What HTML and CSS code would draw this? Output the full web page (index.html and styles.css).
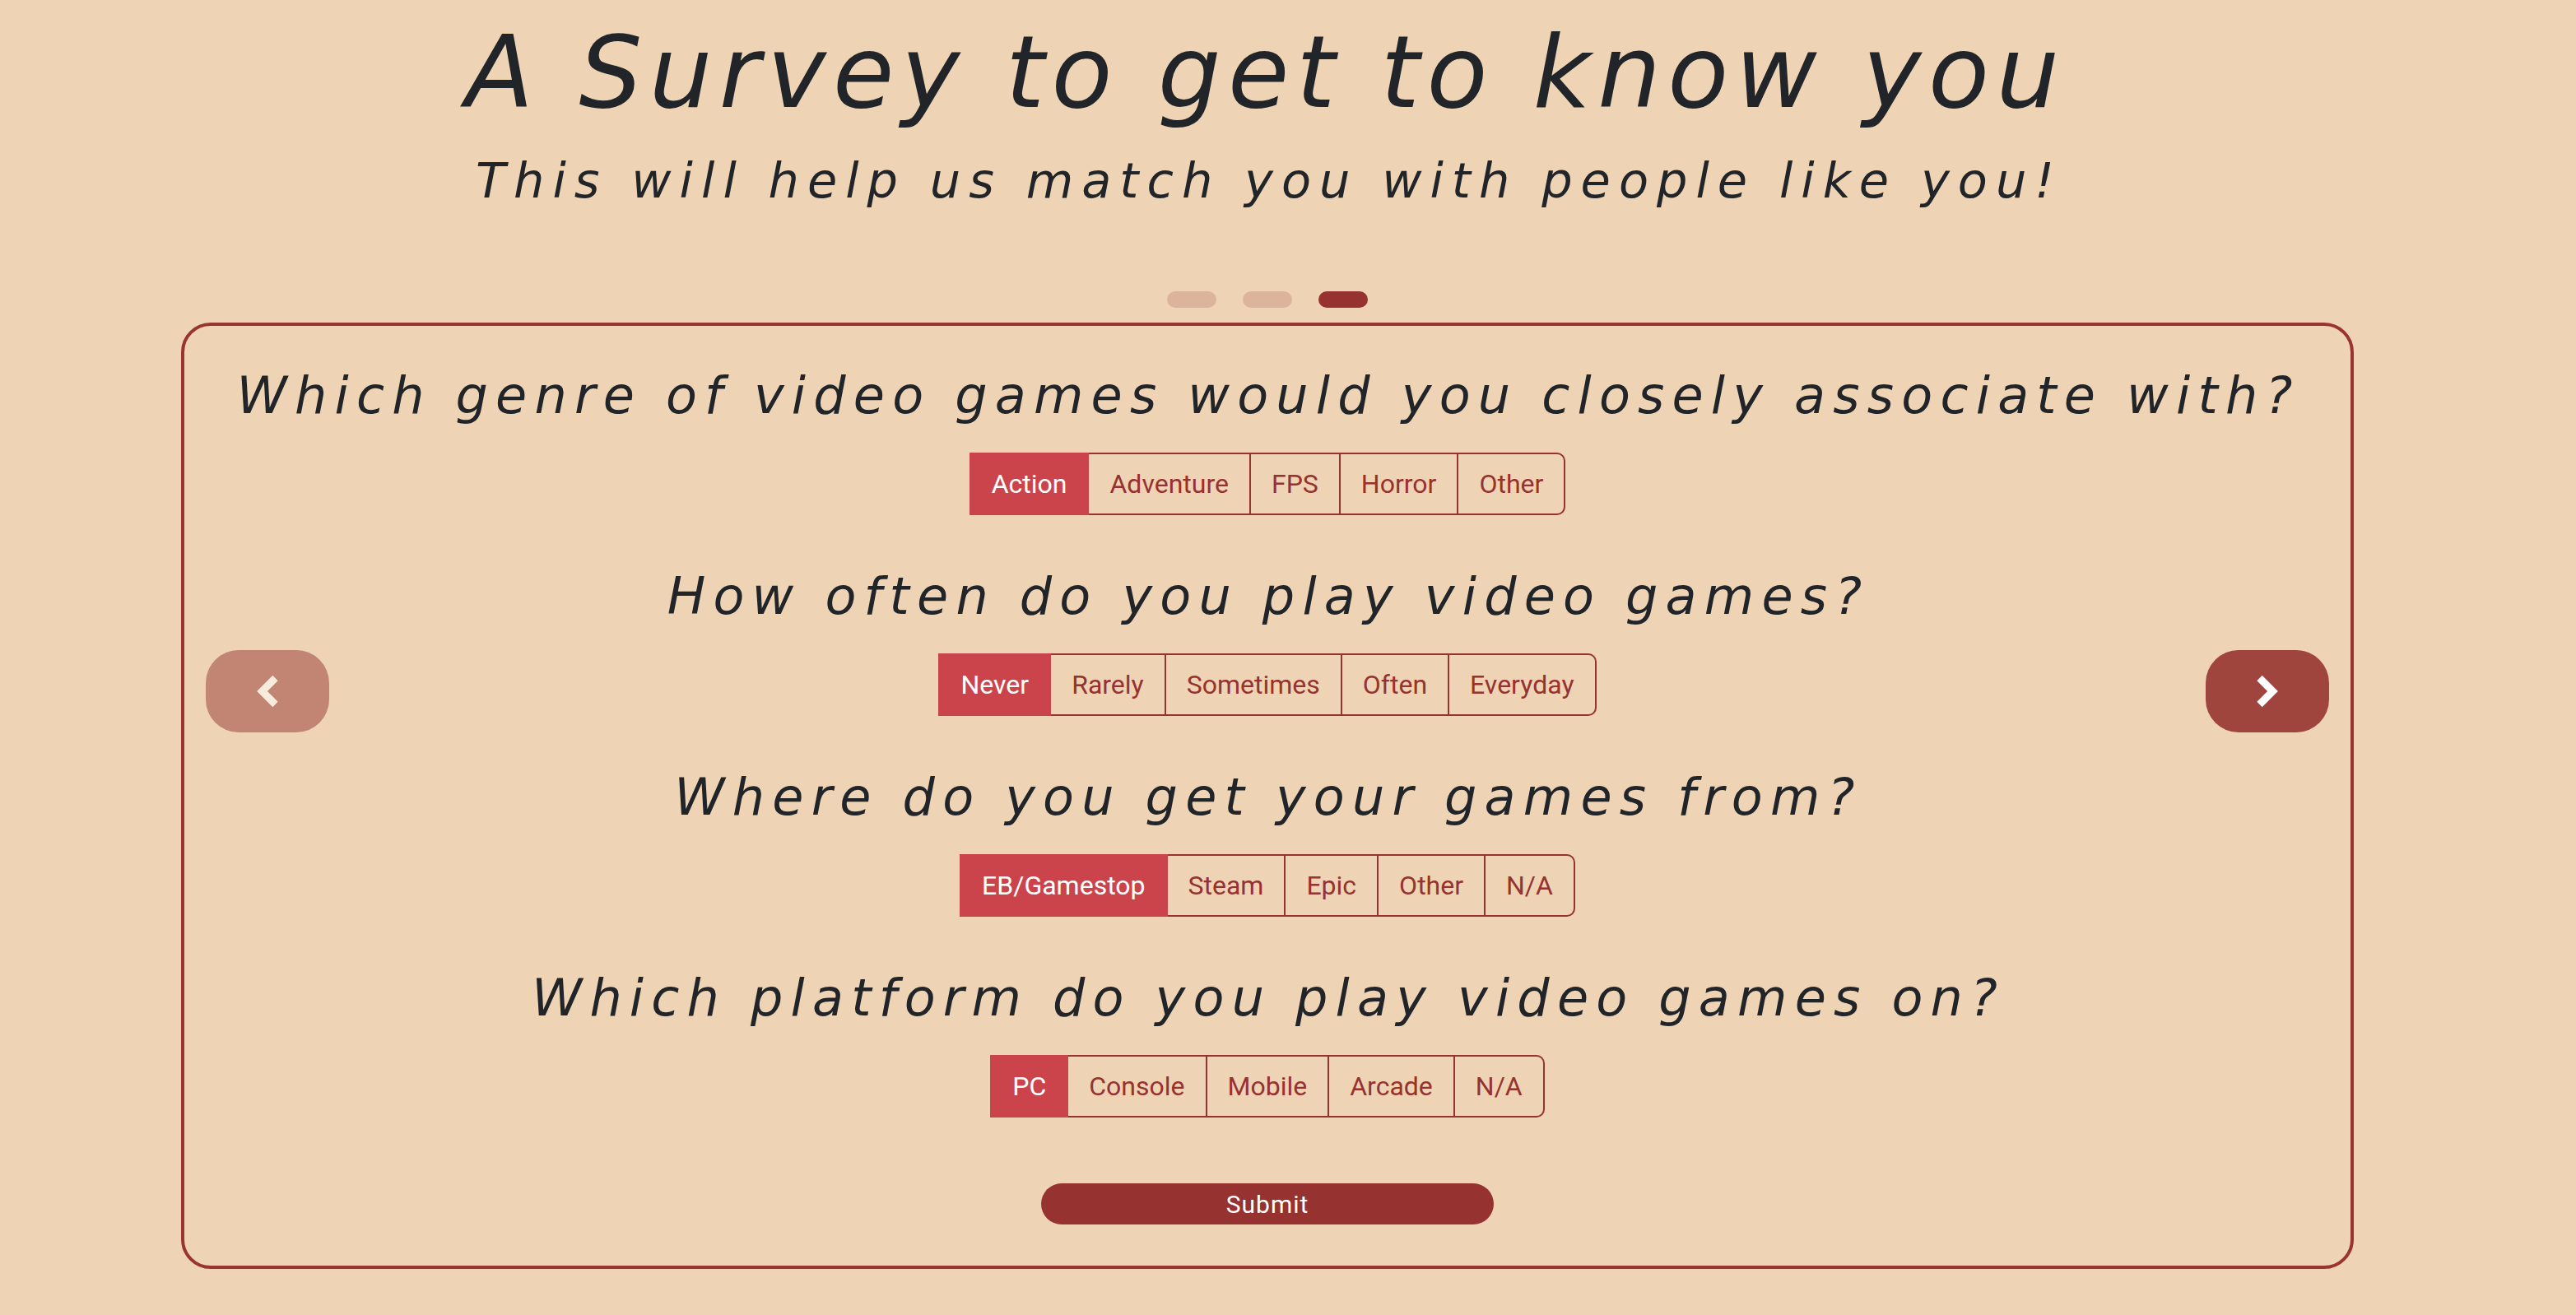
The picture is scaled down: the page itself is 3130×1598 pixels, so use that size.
FILE: index.html
```html
<!DOCTYPE html>
<html lang="en">
<head>
<meta charset="utf-8">
<title>A Survey to get to know you</title>
<link rel="stylesheet" href="styles.css">
</head>
<body>
<main class="page">
  <header class="hero">
    <h1 class="title">A Survey to get to know you</h1>
    <p class="subtitle">This will help us match you with people like you!</p>
  </header>
  <div class="indicators">
    <span class="dot"></span>
    <span class="dot"></span>
    <span class="dot dot-active"></span>
  </div>
  <section class="card">
    <button class="nav nav-prev" aria-label="Previous">
      <svg width="26" height="40" viewBox="0 0 26 40"><polyline points="22.5,4 6.5,20 22.5,36" fill="none" stroke="currentColor" stroke-width="9" stroke-linejoin="miter" stroke-linecap="butt"/></svg>
    </button>
    <button class="nav nav-next" aria-label="Next">
      <svg width="26" height="40" viewBox="0 0 26 40"><polyline points="3.5,4 19.5,20 3.5,36" fill="none" stroke="currentColor" stroke-width="9" stroke-linejoin="miter" stroke-linecap="butt"/></svg>
    </button>
    <div class="questions">
      <div class="question">
        <h2 class="q-title">Which genre of video games would you closely associate with?</h2>
        <div class="btn-group">
          <button class="opt opt-active">Action</button><button class="opt">Adventure</button><button class="opt">FPS</button><button class="opt">Horror</button><button class="opt">Other</button>
        </div>
      </div>
      <div class="question">
        <h2 class="q-title">How often do you play video games?</h2>
        <div class="btn-group">
          <button class="opt opt-active">Never</button><button class="opt">Rarely</button><button class="opt">Sometimes</button><button class="opt">Often</button><button class="opt">Everyday</button>
        </div>
      </div>
      <div class="question">
        <h2 class="q-title">Where do you get your games from?</h2>
        <div class="btn-group">
          <button class="opt opt-active">EB/Gamestop</button><button class="opt">Steam</button><button class="opt">Epic</button><button class="opt">Other</button><button class="opt">N/A</button>
        </div>
      </div>
      <div class="question">
        <h2 class="q-title">Which platform do you play video games on?</h2>
        <div class="btn-group">
          <button class="opt opt-active">PC</button><button class="opt">Console</button><button class="opt">Mobile</button><button class="opt">Arcade</button><button class="opt">N/A</button>
        </div>
      </div>
    </div>
    <button class="submit">Submit</button>
  </section>
</main>
</body>
</html>
```

FILE: styles.css
```css
html, body {
  margin: 0;
  padding: 0;
}
body {
  background: #eed4b4;
  font-family: Roboto, "Liberation Sans", sans-serif;
  color: #212529;
}
.page {
  width: 2640px;
  margin-left: 220px;
}
.hero {
  padding-top: 16px;
  text-align: center;
}
.title {
  margin: 0;
  font-family: "DejaVu Sans", sans-serif;
  font-style: italic;
  font-weight: 400;
  font-size: 121px;
  line-height: 145px;
  letter-spacing: 8.4px;
  padding-right: 4px;
}
.subtitle {
  margin: 23px 0 0;
  font-family: "DejaVu Sans", sans-serif;
  font-style: italic;
  font-size: 59px;
  line-height: 71px;
  letter-spacing: 10px;
  padding-left: 4px;
}
.indicators {
  display: flex;
  justify-content: center;
  gap: 32px;
  margin-top: 99px;
}
.dot {
  width: 60px;
  height: 20px;
  border-radius: 10px;
  background: #dcb49c;
}
.dot-active {
  background: #963230;
}
.card {
  position: relative;
  margin-top: 18px;
  border: 4px solid #993430;
  border-radius: 36px;
  padding: 48px 0 50px;
  display: flex;
  flex-direction: column;
  align-items: center;
}
.questions {
  display: flex;
  flex-direction: column;
  align-items: center;
  gap: 62px;
  width: 100%;
}
.question {
  display: flex;
  flex-direction: column;
  align-items: center;
  gap: 32px;
}
.q-title {
  margin: 0;
  font-family: "DejaVu Sans", sans-serif;
  font-style: italic;
  font-weight: 400;
  font-size: 62px;
  line-height: 74px;
  letter-spacing: 9.2px;
  padding-left: 2px;
  color: #212529;
}
.btn-group {
  display: inline-flex;
}
.opt {
  position: relative;
  margin: 0 0 0 -2px;
  padding: 12px 25px;
  border: 2px solid #963230;
  background: transparent;
  color: #963230;
  font-family: Roboto, "Liberation Sans", sans-serif;
  font-size: 32px;
  line-height: 48px;
  font-weight: 400;
  border-radius: 0;
}
.opt:first-child {
  margin-left: 0;
}
.opt:last-child {
  border-radius: 0 10px 10px 0;
}
.opt-active {
  background: #cc444b;
  border-color: #cc444b;
  color: #ffffff;
  z-index: 1;
}
.submit {
  margin-top: 80px;
  width: 550px;
  height: 50px;
  border: 0;
  border-radius: 25px;
  background: #963230;
  color: #ffffff;
  font-family: Roboto, "Liberation Sans", sans-serif;
  font-size: 30px;
  letter-spacing: 1px;
  padding: 0;
}
.nav {
  position: absolute;
  top: 394px;
  width: 150px;
  height: 100px;
  padding: 0;
  border: 0;
  border-radius: 40px;
  background: #a0453e;
  color: #ffffff;
  display: flex;
  align-items: center;
  justify-content: center;
}
.nav-prev {
  left: 26px;
  opacity: 0.55;
}
.nav-next {
  right: 26px;
}
```
